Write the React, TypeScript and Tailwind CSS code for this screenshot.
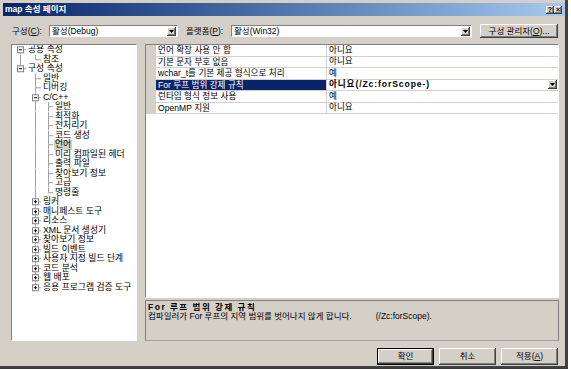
import React from 'react';

const FONT = "font-['Liberation_Sans','Noto_Sans_CJK_KR',sans-serif]";
const RAISED =
  'bg-[#d4d0c8] shadow-[inset_-1px_-1px_#404040,inset_1px_1px_#ffffff,inset_-2px_-2px_#808080,inset_2px_2px_#d4d0c8]';
const SUNKEN = 'border border-t-[#808080] border-l-[#808080] border-b-white border-r-white';

type Kind = 'open' | 'closed' | 'leaf';
interface TreeRow {
  label: string;
  level: number;
  kind: Kind;
  last: boolean;
  anc: boolean[]; // true = ancestor at that column is the last sibling
  first?: boolean;
  selected?: boolean;
}

const cpp = ['일반', '최적화', '전처리기', '코드 생성', '언어', '미리 컴파일된 헤더', '출력 파일', '찾아보기 정보', '고급', '명령줄'];
const config = ['링커', '매니페스트 도구', '리소스', 'XML 문서 생성기', '찾아보기 정보', '빌드 이벤트', '사용자 지정 빌드 단계', '코드 분석', '웹 배포', '응용 프로그램 검증 도구'];

const treeRows: TreeRow[] = [
  { label: '공용 속성', level: 0, kind: 'open', last: false, anc: [], first: true },
  { label: '참조', level: 1, kind: 'leaf', last: true, anc: [false] },
  { label: '구성 속성', level: 0, kind: 'open', last: true, anc: [] },
  { label: '일반', level: 1, kind: 'leaf', last: false, anc: [true] },
  { label: '디버깅', level: 1, kind: 'leaf', last: false, anc: [true] },
  { label: 'C/C++', level: 1, kind: 'open', last: false, anc: [true] },
  ...cpp.map((label, i) => ({
    label,
    level: 2,
    kind: 'leaf' as Kind,
    last: i === cpp.length - 1,
    anc: [true, false],
    selected: label === '언어',
  })),
  ...config.map((label, i) => ({
    label,
    level: 1,
    kind: 'closed' as Kind,
    last: i === config.length - 1,
    anc: [true],
  })),
];

const CX = [8.5, 23.5, 36.5];
const TX = [15, 30, 42];
const ROW_H = 9.5;

function TreeItem({ row }: { row: TreeRow }) {
  const w = TX[row.level];
  const cx = CX[row.level];
  const mid = ROW_H / 2;
  const line = '#a0a0a0';
  return (
    <div className="flex h-[9.5px] items-center">
      <svg width={w} height={ROW_H} className="shrink-0">
        {row.anc.map((isLast, c) =>
          isLast ? null : <line key={c} x1={CX[c]} y1={0} x2={CX[c]} y2={ROW_H} stroke={line} strokeWidth={1} />
        )}
        {!row.first && <line x1={cx} y1={0} x2={cx} y2={mid} stroke={line} strokeWidth={1} />}
        {!row.last && <line x1={cx} y1={mid} x2={cx} y2={ROW_H} stroke={line} strokeWidth={1} />}
        <line x1={cx} y1={mid} x2={w - 1} y2={mid} stroke={line} strokeWidth={1} />
        {row.kind !== 'leaf' && (
          <g>
            <rect x={cx - 3} y={mid - 3} width={6} height={6} fill="#ffffff" stroke="#808080" strokeWidth={1} />
            <line x1={cx - 1.5} y1={mid} x2={cx + 1.5} y2={mid} stroke="#000000" strokeWidth={1} />
            {row.kind === 'closed' && (
              <line x1={cx} y1={mid - 1.5} x2={cx} y2={mid + 1.5} stroke="#000000" strokeWidth={1} />
            )}
          </g>
        )}
      </svg>
      <span
        className={`whitespace-nowrap px-[1px] text-[8.8px] leading-[9.5px] text-black ${
          row.selected ? 'bg-[#d4d0c8]' : ''
        }`}
      >
        {row.label}
      </span>
    </div>
  );
}

function DropArrow({ className = '' }: { className?: string }) {
  return (
    <div className={`${RAISED} flex items-center justify-center ${className}`}>
      <svg width="5" height="3" viewBox="0 0 5 3">
        <path d="M0 0h5L2.5 3z" fill="#000" />
      </svg>
    </div>
  );
}

function Combo({ text, className }: { text: string; className: string }) {
  return (
    <div className={`${SUNKEN} bg-white h-[12px] flex items-center ${className}`}>
      <span className="flex-1 pl-[2px] text-[8.5px] leading-none whitespace-nowrap">{text}</span>
      <DropArrow className="w-[9px] h-[9px] mr-[1px]" />
    </div>
  );
}

const props: { name: string; value: string; selected?: boolean }[] = [
  { name: '언어 확장 사용 안 함', value: '아니요' },
  { name: '기본 문자 부호 없음', value: '아니요' },
  { name: 'wchar_t를 기본 제공 형식으로 처리', value: '예' },
  { name: 'For 루프 범위 강제 규칙', value: '아니요(/Zc:forScope-)', selected: true },
  { name: '런타임 형식 정보 사용', value: '예' },
  { name: 'OpenMP 지원', value: '아니요' },
];

function DialogButton({ children, isDefault }: { children: React.ReactNode; isDefault?: boolean }) {
  return (
    <div className={`w-[57px] h-[17px] ${isDefault ? 'border border-black' : ''}`}>
      <div className={`${RAISED} w-full h-full flex items-center justify-center text-[8.5px] leading-none`}>
        {children}
      </div>
    </div>
  );
}

export default function App() {
  return (
    <div className="w-[571px] h-[370px] bg-white">
      <div
        className={`w-[568px] h-[369px] bg-[#d4d0c8] border-r-[3px] border-b-[3px] border-[#404040] pt-[3px] pl-[3px] flex flex-col text-black ${FONT}`}
      >
        {/* title bar */}
        <div className="h-[13px] flex items-center justify-between bg-gradient-to-r from-[#0a246a] to-[#a6caf0] pl-[2px] pr-[3px]">
          <span className="text-white font-bold text-[8.5px] leading-none whitespace-nowrap">map 속성 페이지</span>
          <div className="flex">
            <div className={`${RAISED} w-[8px] h-[8px] flex items-center justify-center text-[7px] font-bold leading-none`}>?</div>
            <div className={`${RAISED} w-[8px] h-[8px] flex items-center justify-center text-[7px] font-bold leading-none`}>×</div>
          </div>
        </div>

        {/* configuration row */}
        <div className="mt-[8px] h-[14px] flex items-center pl-[9px] text-[8.5px]">
          <span className="w-[37px] whitespace-nowrap leading-none">
            구성(<span className="underline">C</span>):
          </span>
          <Combo text="활성(Debug)" className="w-[129px]" />
          <span className="ml-[8px] w-[45px] whitespace-nowrap leading-none">
            플랫폼(<span className="underline">P</span>):
          </span>
          <Combo text="활성(Win32)" className="w-[241px]" />
          <div className={`${RAISED} ml-[8px] w-[78px] h-[14px] flex items-center justify-center leading-none whitespace-nowrap`}>
            구성 관리자(<span className="underline">O</span>)...
          </div>
        </div>

        {/* main area */}
        <div className="mt-[6px] flex gap-[8px] pl-[8px]">
          <div className={`${SUNKEN} bg-white w-[126px] h-[297px] overflow-hidden`}>
            {treeRows.map((row, i) => (
              <TreeItem key={i} row={row} />
            ))}
          </div>

          <div className="w-[414px] flex flex-col">
            <div className={`${SUNKEN} bg-white h-[254px]`}>
              {props.map((p, i) => (
                <div key={i} className="flex h-[11.5px] text-[8.6px] leading-[11px]">
                  <div className="w-[10px] shrink-0 bg-[#d4d0c8]" />
                  <div
                    className={`w-[171px] shrink-0 border-r border-b border-[#d4d0c8] pl-[2px] whitespace-nowrap ${
                      p.selected ? 'bg-[#0a246a] text-white' : ''
                    }`}
                  >
                    {p.name}
                  </div>
                  <div className="flex-1 border-b border-[#d4d0c8] pl-[2px] flex items-center justify-between whitespace-nowrap">
                    <span className={p.selected ? 'font-bold tracking-[0.9px]' : ''}>{p.value}</span>
                    {p.selected && <DropArrow className="w-[9px] h-[9px] mr-[1px]" />}
                  </div>
                </div>
              ))}
            </div>
            <div className="mt-[2px] h-[41px] border border-[#808080] border-b-[#a0a0a0] pl-[2px] pt-[2px]">
              <div className="font-bold text-[8.5px] tracking-[1.5px] leading-[9px] whitespace-nowrap">
                For 루프 범위 강제 규칙
              </div>
              <div className="text-[8.5px] leading-[9px] whitespace-nowrap">
                컴파일러가 For 루프의 지역 범위를 벗어나지 않게 합니다.
                <span className="ml-[24px]">(/Zc:forScope).</span>
              </div>
            </div>
          </div>
        </div>

        {/* buttons */}
        <div className="mt-[7px] flex justify-end gap-[5px] pr-[7px]">
          <DialogButton isDefault>확인</DialogButton>
          <DialogButton>취소</DialogButton>
          <DialogButton>
            적용(<span className="underline">A</span>)
          </DialogButton>
        </div>
      </div>
    </div>
  );
}
